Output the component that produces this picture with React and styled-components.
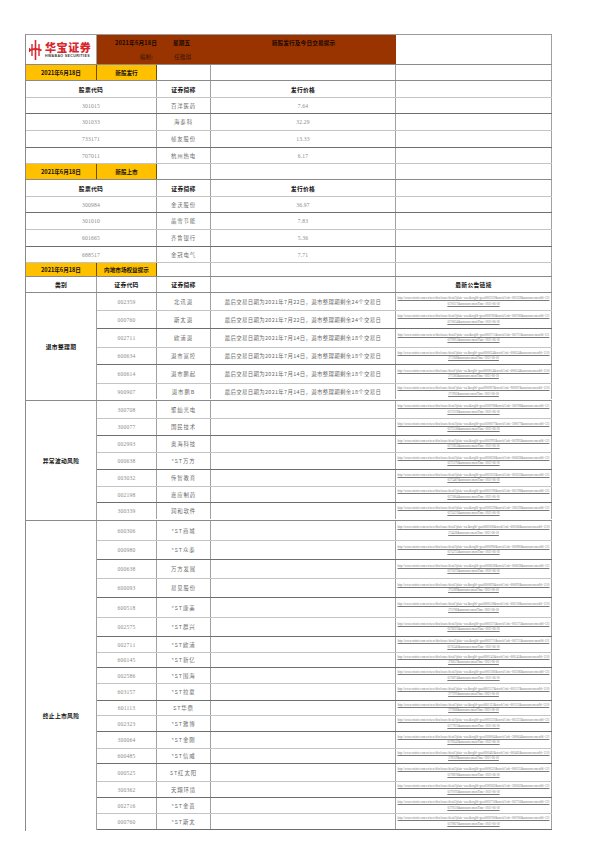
import React from 'react';
import styled, { createGlobalStyle } from 'styled-components';

const GlobalStyle = createGlobalStyle`
  html, body { margin: 0; padding: 0; background: #fff; }
  body { font-family: "Noto Sans CJK SC", "Liberation Sans", sans-serif; }
`;

const Sheet = styled.div`
  width: 595px;
  height: 842px;
  padding: 34px 0 0 25px;
  box-sizing: border-box;
  overflow: hidden;
`;

const Table = styled.div`
  width: 527px;
  box-sizing: border-box;
  border-left: 1px solid #8a8a8a;
  border-top: 1px solid #9a9a9a;
  display: flex;
  flex-direction: column;
`;

const Row = styled.div`
  display: grid;
  grid-template-columns: ${(p) => p.cols};
  height: ${(p) => p.h}px;
  box-sizing: border-box;
  border-bottom: 1px solid ${(p) => p.line || '#9a9a9a'};
`;

const Cell = styled.div`
  box-sizing: border-box;
  border-right: 1px solid #a0a0a0;
  display: flex;
  align-items: center;
  justify-content: ${(p) => p.align || 'center'};
  padding: 0 ${(p) => p.pad || 0}px;
  overflow: hidden;
  white-space: nowrap;
`;

const YellowCell = styled(Cell)`
  background: #ffc000;
  border-right: 1px solid #6a5200;
  font-size: 5.6px;
  font-weight: 700;
  color: #111;
`;

const HeadCell = styled(Cell)`
  font-size: 5.8px;
  font-weight: 700;
  color: #111;
  letter-spacing: 0.3px;
`;

const CodeCell = styled(Cell)`
  font-family: "Liberation Serif", "Noto Sans CJK SC", serif;
  font-size: 5.6px;
  color: #8a8a8a;
  letter-spacing: 0.2px;
`;

const NameCell = styled(Cell)`
  font-size: 5.4px;
  color: #6a6a6a;
  letter-spacing: 0.9px;
`;

const ReasonCell = styled(Cell)`
  font-size: 5.4px;
  color: #6a6a6a;
  letter-spacing: 0.35px;
`;

const LinkCell = styled(Cell)`
  white-space: normal;
  padding: 0 1px;
`;

const LinkText = styled.span`
  display: block;
  width: 100%;
  font-family: "Liberation Serif", serif;
  font-size: 3px;
  line-height: 5.5px;
  color: #7a7a7a;
  text-decoration: underline;
  text-align: center;
  word-break: break-all;
`;

/* page header */
const TopRow = styled.div`
  display: grid;
  grid-template-columns: 71px 299px 156px;
  height: 30px;
  box-sizing: border-box;
  border-bottom: 1px solid #8a8a8a;
`;

const LogoCell = styled.div`
  box-sizing: border-box;
  border-right: 1px solid #a0a0a0;
  display: flex;
  align-items: center;
  padding-left: 3px;
  gap: 3px;
`;

const LogoWords = styled.div`
  display: flex;
  flex-direction: column;
  align-items: flex-start;
`;

const LogoCn = styled.span`
  font-size: 11px;
  line-height: 13px;
  font-weight: 900;
  color: #d7262c;
  letter-spacing: 0.6px;
`;

const LogoEn = styled.span`
  font-family: "Liberation Sans", sans-serif;
  font-size: 3.6px;
  line-height: 5px;
  font-weight: 700;
  color: #3a3a3a;
  letter-spacing: 0.35px;
`;

const Banner = styled.div`
  background: #993300;
  display: grid;
  grid-template-columns: 60px 54px 185px;
  grid-template-rows: 15px 14px;
`;

const BannerText = styled.div`
  display: flex;
  align-items: center;
  justify-content: ${(p) => p.align || 'center'};
  padding: 0 ${(p) => p.pad || 0}px;
  font-size: 5.6px;
  font-weight: ${(p) => (p.bold ? 700 : 400)};
  color: ${(p) => (p.bold ? '#1a0a00' : '#3a1a08')};
  white-space: nowrap;
  letter-spacing: 0.2px;
`;

const BlankCell = styled.div`
  box-sizing: border-box;
  border-right: 1px solid #a0a0a0;
`;

/* risk groups */
const Group = styled.div`
  display: flex;
  box-sizing: border-box;
  border-bottom: 1px solid ${(p) => (p.open ? 'transparent' : '#8a8a8a')};
`;

const Category = styled.div`
  width: 71px;
  flex: none;
  box-sizing: border-box;
  border-right: 1px solid #a0a0a0;
  display: flex;
  justify-content: center;
  align-items: ${(p) => (p.top ? 'flex-start' : 'center')};
  padding-top: ${(p) => p.top || 0}px;
  font-size: 5.8px;
  font-weight: 700;
  color: #111;
  letter-spacing: 0.3px;
`;

const GroupRows = styled.div`
  display: flex;
  flex-direction: column;
  flex: 1;
`;

const newIssues = [
  ['301015', '百洋医药', '7.64'],
  ['301033', '海泰科', '32.29'],
  ['733171', '帧友股份', '13.33'],
  ['707011', '杭州热电', '6.17'],
];

const newListings = [
  ['300984', '金沃股份', '36.97'],
  ['301010', '晶雪节能', '7.83'],
  ['601665', '齐鲁银行', '5.36'],
  ['688517', '金冠电气', '7.71'],
];

const r1 = '最后交易日期为2021年7月22日，退市整理期剩余24个交易日';
const r2 = '最后交易日期为2021年7月14日，退市整理期剩余18个交易日';

const groups = [
  {
    label: '退市整理期',
    rows: [
      ['002359', '北讯退', r1, 18],
      ['000760', '斯太退', r1, 18],
      ['002711', '欧浦退', r2, 19],
      ['600634', '退市富控', r2, 17],
      ['600614', '退市鹏起', r2, 19],
      ['900907', '退市鹏B', r2, 16],
    ],
  },
  {
    label: '异常波动风险',
    rows: [
      ['300708', '聚灿光电', '', 18],
      ['300077', '国民技术', '', 17],
      ['002993', '奥海科技', '', 17],
      ['000638', '*ST万方', '', 17],
      ['003032', '传智教育', '', 17],
      ['002198', '嘉应制药', '', 16],
      ['300339', '润和软件', '', 17],
    ],
  },
  {
    label: '终止上市风险',
    top: 190,
    open: true,
    rows: [
      ['600306', '*ST商城', '', 20],
      ['000980', '*ST众泰', '', 19],
      ['000638', '万方发展', '', 19],
      ['600093', '易见股份', '', 19],
      ['600518', '*ST康美', '', 20],
      ['002575', '*ST群兴', '', 19],
      ['002711', '*ST欧浦', '', 16],
      ['600145', '*ST新亿', '', 15],
      ['002586', '*ST围海', '', 16],
      ['603157', '*ST拉夏', '', 17],
      ['601113', 'ST华鼎', '', 15],
      ['002323', '*ST雅博', '', 16],
      ['300064', '*ST金刚', '', 17],
      ['600485', '*ST信威', '', 15],
      ['000525', 'ST红太阳', '', 18],
      ['300362', '天翔环境', '', 16],
      ['002716', '*ST金贵', '', 16],
      ['000760', '*ST斯太', '', 16],
    ],
  },
];

const lines = ['#c4c4c4', '#6e6e6e'];

const linkFor = (code, i) => {
  const plate = code.startsWith('6') || code.startsWith('9') ? 'sse' : 'szse';
  const org = `gssz0${code}`;
  const id = 1210270000 + i * 317;
  return `http://www.cninfo.com.cn/new/disclosure/detail?plate=${plate}&orgId=${org}&stockCode=${code}&announcementId=${id}&announcementTime=2021-06-18`;
};

function Logo() {
  return (
    <svg width="13" height="22" viewBox="0 0 13 22">
      <path d="M6.5 1 V21" stroke="#d7262c" strokeWidth="1.6" />
      <path d="M3 5 V17" stroke="#d7262c" strokeWidth="1.4" />
      <path d="M10 5 V17" stroke="#d7262c" strokeWidth="1.4" />
      <path d="M0.5 9 V13" stroke="#d7262c" strokeWidth="1.2" />
      <path d="M0.5 11.5 C3 9.5 10 9.5 12.5 11.5" stroke="#d7262c" strokeWidth="1.8" fill="none" />
    </svg>
  );
}

function SectionTitle({ title }) {
  return (
    <Row cols="71px 60px 54px 185px 156px" h={16} line="#8a8a8a">
      <YellowCell>2021年6月18日</YellowCell>
      <YellowCell>{title}</YellowCell>
      <BlankCell />
      <BlankCell />
      <BlankCell />
    </Row>
  );
}

function PriceSection({ title, items }) {
  return (
    <>
      <SectionTitle title={title} />
      <Row cols="131px 54px 185px 156px" h={17} line="#c4c4c4">
        <HeadCell>股票代码</HeadCell>
        <HeadCell>证券简称</HeadCell>
        <HeadCell>发行价格</HeadCell>
        <BlankCell />
      </Row>
      {items.map(([code, name, price], i) => (
        <Row key={code} cols="131px 54px 185px 156px" h={i % 3 === 0 ? 16 : 17} line={lines[(i + 1) % 2]}>
          <CodeCell>{code}</CodeCell>
          <NameCell>{name}</NameCell>
          <CodeCell>{price}</CodeCell>
          <BlankCell />
        </Row>
      ))}
    </>
  );
}

export default function App() {
  let n = 0;
  return (
    <Sheet>
      <GlobalStyle />
      <Table>
        <TopRow>
          <LogoCell>
            <Logo />
            <LogoWords>
              <LogoCn>华宝证券</LogoCn>
              <LogoEn>HWABAO SECURITIES</LogoEn>
            </LogoWords>
          </LogoCell>
          <Banner>
            <BannerText bold align="flex-end">2021年6月18日</BannerText>
            <BannerText bold align="flex-start" pad={16}>星期五</BannerText>
            <BannerText bold>新股发行及今日交易提示</BannerText>
            <BannerText align="flex-end" pad={4}>编制:</BannerText>
            <BannerText align="flex-start" pad={17}>任雅琪</BannerText>
            <BannerText />
          </Banner>
          <BlankCell />
        </TopRow>

        <PriceSection title="新股发行" items={newIssues} />
        <PriceSection title="新股上市" items={newListings} />

        <Row cols="71px 60px 54px 185px 156px" h={14} line="#8a8a8a">
          <YellowCell>2021年6月18日</YellowCell>
          <YellowCell>内地市场权益提示</YellowCell>
          <BlankCell />
          <BlankCell />
          <BlankCell />
        </Row>
        <Row cols="71px 60px 54px 185px 156px" h={16} line="#8a8a8a">
          <HeadCell>类别</HeadCell>
          <HeadCell>证券代码</HeadCell>
          <HeadCell>证券简称</HeadCell>
          <BlankCell />
          <HeadCell>最新公告链接</HeadCell>
        </Row>

        {groups.map((g) => (
          <Group key={g.label} open={g.open}>
            <Category top={g.top}>{g.label}</Category>
            <GroupRows>
              {g.rows.map(([code, name, reason, h], i) => {
                n += 1;
                const last = i === g.rows.length - 1;
                return (
                  <Row
                    key={code + name}
                    cols="60px 54px 185px 156px"
                    h={h}
                    line={last && !g.open ? 'transparent' : lines[i % 2]}
                  >
                    <CodeCell>{code}</CodeCell>
                    <NameCell>{name}</NameCell>
                    <ReasonCell>{reason}</ReasonCell>
                    <LinkCell>
                      <LinkText>{linkFor(code, n)}</LinkText>
                    </LinkCell>
                  </Row>
                );
              })}
            </GroupRows>
          </Group>
        ))}
      </Table>
    </Sheet>
  );
}
